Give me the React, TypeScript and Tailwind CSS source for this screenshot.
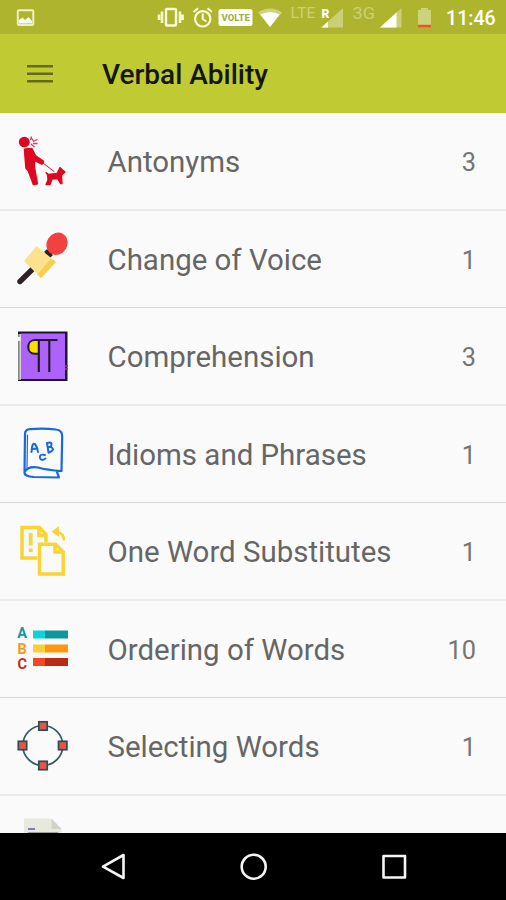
import type { ReactNode } from "react";

function Icon({ children }: { children: ReactNode }) {
  return (
    <svg viewBox="0 0 90 90" className="mt-[2px] h-[90px] w-[90px] shrink-0" aria-hidden="true">
      {children}
    </svg>
  );
}

const dogWalker = (
  <Icon>
    <g transform="translate(0 -2)">
      <g fill="#dc0a20" stroke="#dc0a20" strokeLinejoin="round" strokeLinecap="round">
        <ellipse cx="24.3" cy="27" rx="5.5" ry="5.3" stroke="none" />
        <path d="M25 34.5 L31.5 34 L35 41 L43 46.5 L42 48.5 L34 44.5 L33.8 52 L36.8 68.5 L33.8 69 L29 56 L26.5 53 L25.5 41 Z" strokeWidth="2.6" />
        <path d="M43 48 L54 56.5" strokeWidth="1" fill="none" />
        <path d="M46 57.5 L48.5 59.5 L57 58.5 L60 52.5 L62 54.5 L65 57 L61.5 60 L62 68.5 L60.5 68.5 L57.5 63.5 L52 64 L50 69.5 L46 69.5 L48 65 L47.5 60 Z" strokeWidth="1.3" />
      </g>
      <path d="M30.5 25 L31.5 21.5 M31.5 23 L33.5 26 M33 26.5 L37.5 24.5 M31 29 L34.5 32 M33 28.5 L37.5 28.5" stroke="#cf3f68" strokeWidth="1.3" fill="none" />
    </g>
  </Icon>
);

const microphone = (
  <Icon>
    <path d="M20 66.5 L51 36" stroke="#302126" strokeWidth="5.4" strokeLinecap="round" />
    <path d="M45.5 35.5 L51.5 41.5" stroke="#302126" strokeWidth="4" />
    <path d="M36.5 31 L56 47 L41 63 L24 46 Z" fill="#fce28d" />
    <path d="M51 43.5 L56 47 L41 63 L37.5 59.5 Z" fill="#f8cf4d" />
    <ellipse cx="57" cy="28.8" rx="10.2" ry="11.5" transform="rotate(32 57 28.8)" fill="#f34040" />
  </Icon>
);

const pilcrow = (
  <Icon>
    <path d="M18 19.5 H67.5 V69 H18 Z" fill="#1d1430" />
    <path d="M18 22 H20.5 V68 H18 Z" fill="#888" />
    <path d="M17 25 H21 V29 H17 Z" fill="#fff" />
    <path d="M21 21.5 H65 V67 H21 Z" fill="#ac62fb" />
    <path d="M20.3 22 V67.5" stroke="#e8e0ee" strokeWidth="1.2" />
    <path d="M38.5 28 H35 C26 28 26 41.8 35 41.8 H38.5 Z" fill="#f9e000" />
    <path d="M57.5 28 H35 C26 28 26 41.8 35 41.8 H38.5 M38.8 28 V60 M49.3 28 V60" fill="none" stroke="#23142e" strokeWidth="2.1" />
    <path d="M65 54 H68 M65 57 H68" stroke="#b22b82" strokeWidth="1.5" />
  </Icon>
);

const dictionary = (
  <Icon>
    <g fill="none" stroke="#1769dd" strokeWidth="2.2" strokeLinecap="round" strokeLinejoin="round">
      <path d="M24.5 62 L25 24 Q25 19.5 30 19.2 Q43 18 56 19.5 Q62 20 62.2 26 L61.5 61 Q47 60 38 57.5 Q28 56 24.5 62 Q24 66.5 34 67 Q48 67.2 59 67.5 L57 62" />
      <path d="M27.5 25 L27 57.5" strokeWidth="1.2" />
      <path d="M31.5 42 Q32 32 35 34 Q37.5 37 38 42 M32 39 L37 38.5" strokeWidth="2" />
      <path d="M47 33 L48.5 42.5 M47 33 Q53 31 51 36.5 L48 37.5 M51 37 Q56 40 48.5 42.7" strokeWidth="2" />
      <path d="M45 45 Q39 43.5 40 48 Q41 51.5 45.5 48.5" strokeWidth="2" />
    </g>
  </Icon>
);

const documents = (
  <Icon>
    <g fill="none" stroke="#f8d535" strokeWidth="3.5">
      <path d="M37.5 51 H22 V20.5 H39.5 L46 27.5 V35.5" />
      <path d="M39 20.5 V28.5 H46" />
      <path d="M39.5 37.2 H55.5 L63.2 45 V67 H39.5 Z" />
      <path d="M55 37.2 V45 H63" />
      <path d="M30.7 26 V38.5 M30.7 41.5 V45" strokeWidth="3.8" />
      <path d="M55 25.5 Q64 25 64 33.5" strokeWidth="2.5" />
    </g>
    <path d="M59 19 L51.5 24.5 L59 30 Z" fill="#f8d535" />
  </Icon>
);

const ordering = (
  <Icon>
    <g fontFamily="Roboto, sans-serif" fontSize="14.5" fontWeight="700" textAnchor="middle">
      <text x="22" y="33" fill="#12999c">A</text>
      <text x="22.2" y="48.5" fill="#fb9819">B</text>
      <text x="22.2" y="64" fill="#b9301f">C</text>
    </g>
    <path d="M33 25.5 H45 V33.5 H33 Z" fill="#0cd3da" />
    <path d="M45 25.5 H68 V33.5 H45 Z" fill="#0d979c" />
    <path d="M33 39.5 H45 V47.5 H33 Z" fill="#ffce32" />
    <path d="M45 39.5 H68 V47.5 H45 Z" fill="#ff980c" />
    <path d="M33 53 H45 V61 H33 Z" fill="#f34722" />
    <path d="M45 53 H68 V61 H45 Z" fill="#b92c14" />
  </Icon>
);

const selection = (
  <Icon>
    <circle cx="42.8" cy="43.5" r="20" fill="none" stroke="#2b6065" strokeWidth="1.7" />
    <g fill="#e75548" stroke="#2b4d56" strokeWidth="1.7">
      <rect x="38.8" y="19.8" width="8.4" height="8.4" />
      <rect x="38.8" y="59.3" width="8.4" height="8.4" />
      <rect x="18.3" y="39.3" width="8.4" height="8.4" />
      <rect x="58.5" y="39.3" width="8.4" height="8.4" />
    </g>
  </Icon>
);

const paper = (
  <Icon>
    <path d="M24 17.5 H51.5 L61.5 28 V70 H24 Z" fill="#e7e9df" />
    <path d="M51.5 17.5 V28 H61.5 Z" fill="#d1d3c6" />
    <path d="M28 28 H35" stroke="#7e79bd" strokeWidth="2" />
    <path d="M28 32 H58" stroke="#85868e" strokeWidth="1.5" />
  </Icon>
);

const rows = [
  { label: "Antonyms", count: 3, icon: dogWalker },
  { label: "Change of Voice", count: 1, icon: microphone },
  { label: "Comprehension", count: 3, icon: pilcrow },
  { label: "Idioms and Phrases", count: 1, icon: dictionary },
  { label: "One Word Substitutes", count: 1, icon: documents },
  { label: "Ordering of Words", count: 10, icon: ordering },
  { label: "Selecting Words", count: 1, icon: selection },
];

function StatusBar() {
  return (
    <div className="flex h-[34px] shrink-0 items-center bg-[#afb42f]">
      <svg viewBox="0 0 440 34" className="h-[34px] w-[440px] shrink-0" aria-hidden="true">
        <rect x="17.8" y="10.3" width="15.5" height="14.8" rx="1" fill="none" stroke="#edf0c7" strokeWidth="2" />
        <path d="M19 23.5 V20 L22.5 17.5 L25 20 L28.5 17 L32 21 V23.5 Z" fill="#fff" />
        <rect x="166" y="9" width="10" height="16.5" rx="1" fill="none" stroke="#fbfbd8" strokeWidth="2.4" />
        <path d="M162 11.5 V23 M180 11.5 V23 M159 14.5 V20 M182.6 14.5 V20" stroke="#f6f7cb" strokeWidth="2.6" />
        <circle cx="202.7" cy="18.8" r="7.7" fill="none" stroke="#fafbd9" strokeWidth="2.2" />
        <path d="M202.7 13.5 V19 L206.5 21.5 M193.5 12 L198 8.3 M207.5 8.3 L212 12" stroke="#fafbd9" strokeWidth="2" fill="none" />
        <rect x="218.5" y="9" width="34" height="17" rx="2.5" fill="#fff" />
        <text x="235.7" y="21" textAnchor="middle" fill="#a8ac48" fontFamily="Roboto, sans-serif" fontSize="9.5" fontWeight="800" textLength="28.5">VOLTE</text>
        <path d="M258 12.5 Q270 4.5 282 12.5 L270 27 Z" fill="#cfd283" />
        <path d="M260.5 14.5 Q270 9.5 279.5 14.5 L270 27 Z" fill="#fff" />
        <text x="290.5" y="18.3" fill="#cbd077" fontFamily="Roboto, sans-serif" fontSize="15" textLength="25" lengthAdjust="spacingAndGlyphs">LTE</text>
        <path d="M343 8 V27.5 H321.5 Z" fill="#cbcf75" />
        <path d="M328 21.5 V27.5 H321.5 Z" fill="#fff" />
        <text x="321.5" y="17.8" fill="#fff" fontFamily="Roboto, sans-serif" fontSize="12" fontWeight="900">R</text>
        <text x="352.5" y="18.5" fill="#cbd077" fontFamily="Roboto, sans-serif" fontSize="17" textLength="22.5" lengthAdjust="spacingAndGlyphs">3G</text>
        <path d="M401.5 8 V27.5 H380 Z" fill="#cbcf75" />
        <path d="M396.5 12.5 V27.5 H380 Z" fill="#fff" />
        <path d="M418 10 H421 V8 H428 V10 H431 V25 H418 Z" fill="#cdd37c" />
        <path d="M418 24.8 H431 V27.3 H418 Z" fill="#f44e2d" />
      </svg>
      <span className="ml-[6px] pt-[3px] whitespace-nowrap text-[19.6px] leading-none font-medium text-white">11:46</span>
    </div>
  );
}

export default function App() {
  return (
    <main className="flex h-[900px] w-[506px] flex-col overflow-hidden bg-[#fafafa] font-['Roboto',sans-serif]">
      <StatusBar />
      <header className="flex h-[79px] shrink-0 items-center bg-[#c0ca33]">
        <svg viewBox="0 0 26 20" className="ml-[27px] h-[20px] w-[26px]" role="img" aria-label="Menu">
          <path d="M0 2.2 H26 M0 9.7 H26 M0 17.2 H26" stroke="#666a1b" strokeWidth="2.4" />
        </svg>
        <h1 className="ml-[49px] pt-[3px] text-[28px] leading-none font-medium text-[#15160a]">Verbal Ability</h1>
      </header>
      <ul className="flex h-[720px] shrink-0 flex-col overflow-hidden">
        {rows.map((row) => (
          <li
            key={row.label}
            className="flex h-[97px] shrink-0 items-center border-b border-[#dadada] odd:h-[98px] odd:border-b-2 odd:border-[#ebebeb]"
          >
            {row.icon}
            <span className="ml-[17.5px] flex-1 whitespace-nowrap pt-[3px] text-[29.45px] leading-none text-[#666]">{row.label}</span>
            <span className="mr-[30px] pt-[3px] text-[25.3px] leading-none text-[#757575]">{row.count}</span>
          </li>
        ))}
        <li className="flex h-[97px] shrink-0 items-center">{paper}</li>
      </ul>
      <nav className="flex h-[67px] shrink-0 bg-black" aria-label="System navigation">
        <svg viewBox="0 0 506 67" className="h-[67px] w-[506px]" aria-hidden="true">
          <g fill="none" stroke="#f5f5f5" strokeWidth="2.6" strokeLinejoin="round">
            <path d="M123.5 22 V45 L103 33.7 Z" />
            <circle cx="253.7" cy="33.7" r="12" />
            <rect x="383.5" y="23" width="21.5" height="21.5" />
          </g>
        </svg>
      </nav>
    </main>
  );
}
